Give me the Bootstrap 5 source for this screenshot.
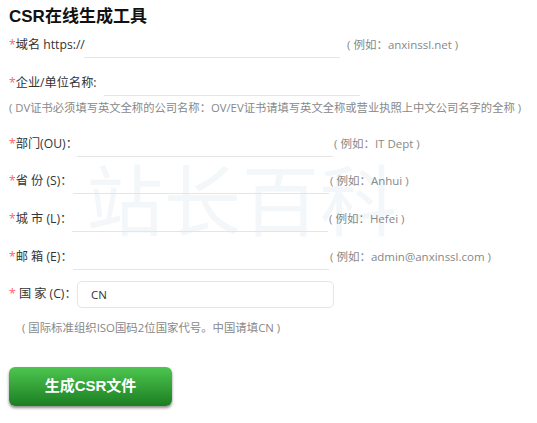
<!DOCTYPE html>
<html lang="zh">
<head>
<meta charset="utf-8">
<link rel="stylesheet" href="https://cdn.jsdelivr.net/npm/bootstrap@5.3.0/dist/css/bootstrap.min.css">
<script src="https://cdn.jsdelivr.net/npm/bootstrap@5.3.0/dist/js/bootstrap.bundle.min.js"></script>
<style>
html,body{height:423px;overflow:hidden;background:#fff}
body{font-family:"Open Sans","Noto Sans CJK SC",sans-serif;font-size:12.2px;color:#333;position:relative}
.csr-wrap{padding:7px 0 0 9px;position:relative;z-index:1}
.csr-title{font-family:"Liberation Sans","Noto Sans CJK SC",sans-serif;font-size:17px;font-weight:700;color:#111;line-height:20px;margin:0 0 5px}
.csr-row{height:26px;align-items:center;white-space:nowrap;margin-bottom:12px}
.csr-row-tight{margin-bottom:11px}
.csr-row-note{margin-bottom:2px}
.csr-star{color:#f66}
.csr-lab{display:block}
.lab-a{width:75px}.lab-b{width:95px}.lab-c{width:68px}.lab-d{width:64px}.lab-e{width:63px}
.csr-line{width:256px;height:26px;border:0;border-bottom:1px solid #e3e5e6;background:transparent;border-radius:0;padding:0;outline:0}
.csr-hint{color:#888;font-size:11.5px;margin-left:1px}
.csr-hint-wide{margin-left:7px}
.csr-note{color:#888;font-size:11.4px;height:20px;line-height:20px;white-space:nowrap}
.csr-note-gap{margin-bottom:13px;font-size:11.3px}
.csr-note-ind{padding-left:13px;margin-top:-5px}
.csr-box{width:257px;height:27px;border:1px solid #e3e5e6;border-radius:5px;padding:0 13px;font-size:11.5px;color:#333;background:#fff;outline:0}
.csr-btn{width:163px;height:39px;margin-top:29px;border:0;border-radius:6px;background:linear-gradient(#4dc650,#1b7e22);color:#fff;font-family:"Liberation Sans","Noto Sans CJK SC",sans-serif;font-weight:700;font-size:15px;box-shadow:0 2px 3px rgba(0,0,0,.45)}
.csr-mark{position:absolute;left:86px;top:157px;font-family:"Noto Sans CJK SC",sans-serif;font-weight:400;font-size:77px;line-height:80px;letter-spacing:1px;color:#f3f7f9;white-space:nowrap}
</style>
</head>
<body>
<div class="csr-mark">站长百科</div>
<form class="csr-wrap">
<h1 class="csr-title">CSR在线生成工具</h1>
<div class="d-flex csr-row"><span class="csr-lab lab-a"><span class="csr-star">*</span>域名 https://</span><input class="csr-line"><span class="csr-hint csr-hint-wide">( 例如：anxinssl.net )</span></div>
<div class="d-flex csr-row csr-row-note"><span class="csr-lab lab-b"><span class="csr-star">*</span>企业/单位名称:</span><input class="csr-line"></div>
<div class="csr-note csr-note-gap">( DV证书必须填写英文全称的公司名称：OV/EV证书请填写英文全称或营业执照上中文公司名字的全称 )</div>
<div class="d-flex csr-row csr-row-tight"><span class="csr-lab lab-c"><span class="csr-star">*</span>部门(OU)：</span><input class="csr-line"><span class="csr-hint">( 例如：IT Dept )</span></div>
<div class="d-flex csr-row"><span class="csr-lab lab-d"><span class="csr-star">*</span>省 份 (S)：</span><input class="csr-line"><span class="csr-hint">( 例如：Anhui )</span></div>
<div class="d-flex csr-row"><span class="csr-lab lab-e"><span class="csr-star">*</span>城 市 (L)：</span><input class="csr-line"><span class="csr-hint">( 例如：Hefei )</span></div>
<div class="d-flex csr-row csr-row-tight"><span class="csr-lab lab-d"><span class="csr-star">*</span>邮 箱 (E)：</span><input class="csr-line"><span class="csr-hint">( 例如：admin@anxinssl.com )</span></div>
<div class="d-flex csr-row mb-3"><span class="csr-lab lab-c"><span class="csr-star">*</span> 国 家 (C)：</span><input class="csr-box" value="CN"></div>
<div class="csr-note csr-note-ind">( 国际标准组织ISO国码2位国家代号。中国请填CN )</div>
<button type="button" class="btn csr-btn d-block">生成CSR文件</button>
</form>
</body>
</html>
